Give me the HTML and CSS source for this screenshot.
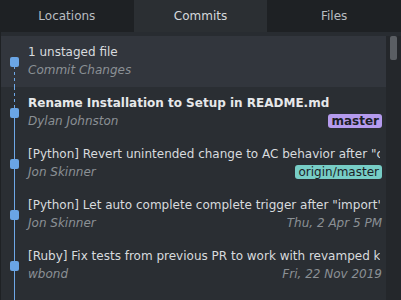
FILE: index.html
```html
<!DOCTYPE html>
<html lang="en">
<head>
    <meta charset="UTF-8">
    <title>Commits</title>
    <link rel="stylesheet" href="styles.css">
</head>
<body>
    <div class="tabs">
        <div class="tab">Locations</div>
        <div class="tab active">Commits</div>
        <div class="tab">Files</div>
    </div>
    <div class="panel">
        <div class="list">
            <div class="row unstaged">
                <div class="graph first"></div>
                <div class="info">
                    <div class="title">1 unstaged file</div>
                    <div class="meta"><span class="author">Commit Changes</span></div>
                </div>
            </div>
            <div class="row">
                <div class="graph head"></div>
                <div class="info">
                    <div class="title bold">Rename Installation to Setup in README.md</div>
                    <div class="meta"><span class="author">Dylan Johnston</span><span class="badge local">master</span></div>
                </div>
            </div>
            <div class="row">
                <div class="graph"></div>
                <div class="info">
                    <div class="title">[Python] Revert unintended change to AC behavior after "c</div>
                    <div class="meta"><span class="author">Jon Skinner</span><span class="badge remote">origin/master</span></div>
                </div>
            </div>
            <div class="row">
                <div class="graph"></div>
                <div class="info">
                    <div class="title">[Python] Let auto complete complete trigger after "import"</div>
                    <div class="meta"><span class="author">Jon Skinner</span><span class="date">Thu, 2 Apr 5 PM</span></div>
                </div>
            </div>
            <div class="row">
                <div class="graph"></div>
                <div class="info">
                    <div class="title">[Ruby] Fix tests from previous PR to work with revamped keywords</div>
                    <div class="meta"><span class="author">wbond</span><span class="date">Fri, 22 Nov 2019</span></div>
                </div>
            </div>
            <div class="row">
                <div class="graph"></div>
            </div>
        </div>
        <div class="scrollbar"><div class="thumb"></div></div>
    </div>
</body>
</html>
```

FILE: styles.css
```css
html, body {
    margin: 0;
    height: 100%;
    overflow: hidden;
}
body {
    font-family: "DejaVu Sans", sans-serif;
    font-size: 12px;
    background-color: #2a2e33;
    color: #d8dbde;
}
.tabs {
    display: flex;
    height: 32px;
    background-color: #1e2124;
}
.tab {
    flex: 1;
    display: flex;
    align-items: center;
    justify-content: center;
    color: #b9bdc1;
}
.tab.active {
    background-color: #2b2f33;
    color: #d6d9dc;
}
.panel {
    display: flex;
    height: 268px;
    padding-top: 4px;
    border-left: 1px solid #1e2124;
    background-color: #282c31;
}
.list {
    flex: 1;
    min-width: 0;
    overflow: hidden;
    background-color: #2a2e33;
}
.row {
    display: flex;
    height: 51px;
}
.row.unstaged {
    background-color: #32363d;
}
.graph {
    position: relative;
    flex: 0 0 27px;
}
.graph::before {
    content: "";
    position: absolute;
    left: 13px;
    top: 0;
    bottom: 0;
    width: 1px;
    background-color: #6ea7e6;
}
.graph::after {
    content: "";
    position: absolute;
    left: 9px;
    top: 21px;
    width: 9px;
    height: 10px;
    border-radius: 2px;
    background-color: #6aa5e5;
}
.graph.first::before {
    top: 30px;
    background: repeating-linear-gradient(to bottom, #6ea7e6 0 3px, transparent 3px 6px);
}
.graph.head::before {
    background: repeating-linear-gradient(to bottom, #6ea7e6 0 3px, transparent 3px 6px) top / 1px 21px no-repeat,
                linear-gradient(#6ea7e6, #6ea7e6) bottom / 1px 26px no-repeat;
}
.info {
    flex: 1;
    min-width: 0;
    padding: 7px 4px 0 0;
}
.title {
    height: 18px;
    line-height: 18px;
    margin-right: 2px;
    white-space: nowrap;
    overflow: hidden;
}
.title.bold {
    font-weight: bold;
    color: #e6e8ea;
}
.meta {
    display: flex;
    justify-content: space-between;
    align-items: center;
    height: 18px;
    line-height: 18px;
    font-style: italic;
    color: #8b9095;
}
.badge {
    font-style: normal;
    line-height: 14px;
    padding: 0 3px;
    border-radius: 3px;
    color: #1d1f26;
}
.badge.local {
    background-color: #b59bee;
    font-weight: bold;
}
.badge.remote {
    background-color: #77cdc6;
}
.scrollbar {
    flex: 0 0 15px;
    box-sizing: border-box;
    background-color: #24272b;
    padding-left: 4px;
}
.thumb {
    width: 7px;
    height: 24px;
    border-radius: 2px;
    background-color: #5a5e63;
}
```
